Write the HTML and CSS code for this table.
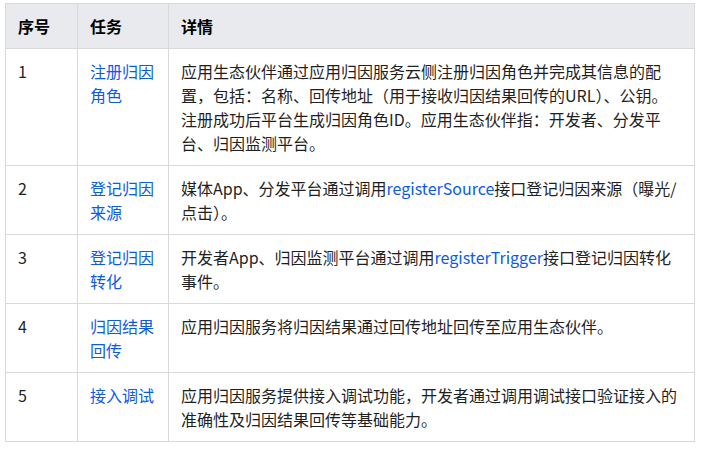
FILE: index.html
```html
<!DOCTYPE html>
<html lang="zh-CN">
<head>
<meta charset="utf-8">
<link rel="stylesheet" href="styles.css">
</head>
<body>
<div class="page">
<table class="tbl">
  <colgroup>
    <col class="c1"><col class="c2"><col class="c3">
  </colgroup>
  <thead>
    <tr><th>序号</th><th>任务</th><th>详情</th></tr>
  </thead>
  <tbody>
    <tr>
      <td>1</td>
      <td><a class="link">注册归因角色</a></td>
      <td>应用生态伙伴通过应用归因服务云侧注册归因角色并完成其信息的配置，包括：名称、回传地址（用于接收归因结果回传的URL）、公钥。注册成功后平台生成归因角色ID。应用生态伙伴指：开发者、分发平台、归因监测平台。</td>
    </tr>
    <tr>
      <td>2</td>
      <td><a class="link">登记归因来源</a></td>
      <td>媒体App、分发平台通过调用<a class="link">registerSource</a>接口登记归因来源（曝光/点击）。</td>
    </tr>
    <tr>
      <td>3</td>
      <td><a class="link">登记归因转化</a></td>
      <td>开发者App、归因监测平台通过调用<a class="link">registerTrigger</a>接口登记归因转化事件。</td>
    </tr>
    <tr>
      <td>4</td>
      <td><a class="link">归因结果回传</a></td>
      <td>应用归因服务将归因结果通过回传地址回传至应用生态伙伴。</td>
    </tr>
    <tr>
      <td>5</td>
      <td><a class="link">接入调试</a></td>
      <td>应用归因服务提供接入调试功能，开发者通过调用调试接口验证接入的准确性及归因结果回传等基础能力。</td>
    </tr>
  </tbody>
</table>
</div>
</body>
</html>
```
FILE: styles.css
```css
html, body {
  margin: 0;
  padding: 0;
  background: #ffffff;
}
.page {
  padding: 3px 0 0 5px;
}
.tbl {
  border-collapse: collapse;
  table-layout: fixed;
  width: 689px;
  font-family: "Noto Sans CJK SC", "Noto Sans", sans-serif;
  font-size: 16px;
  line-height: 24px;
  color: #1f1f1f;
}
.c1 { width: 72px; }
.c2 { width: 91px; }
.c3 { width: 526px; }
.tbl th,
.tbl td {
  border: 1px solid #d9d9d9;
  padding: 10px 12px;
  text-align: left;
  vertical-align: top;
}
.tbl th {
  background: #e9eaed;
  font-weight: 700;
  color: #000000;
}
.link {
  color: #0a59f7;
  text-decoration: none;
}
```
